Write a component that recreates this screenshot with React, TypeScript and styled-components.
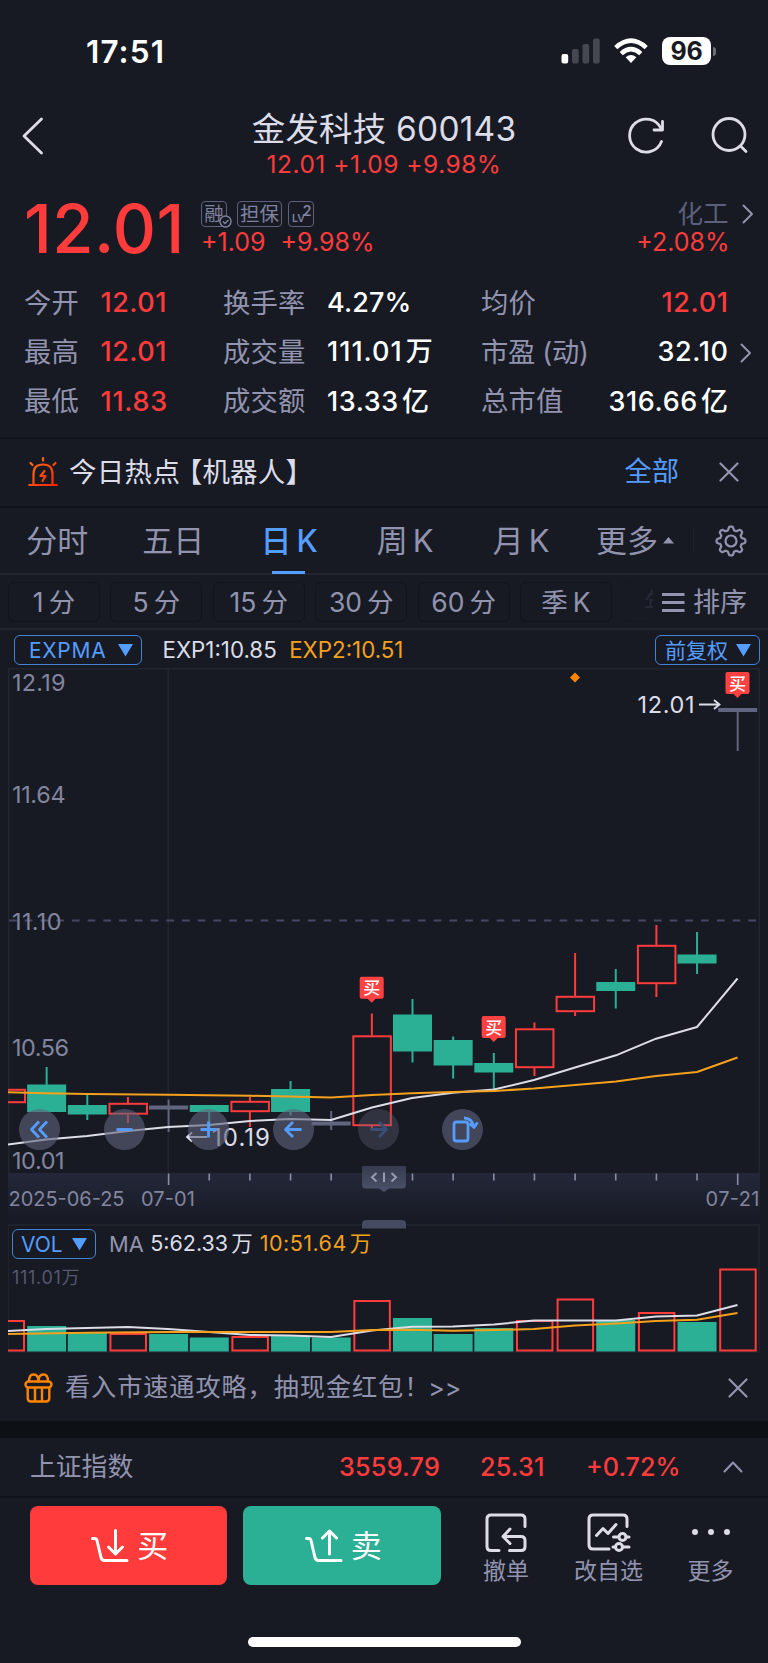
import React from 'react';
import styled, { createGlobalStyle, css } from 'styled-components';

const c = {
  bg: '#171a23',
  red: '#ff3b3b',
  green: '#2bb096',
  blue: '#559cff',
  orange: '#f5a11c',
  label: '#9293ae',
  bright: '#dcdde8',
  line: '#22242f',
  dark: '#10131a',
};

const Global = createGlobalStyle`
  * { box-sizing: border-box; }
  body { margin: 0; background: ${c.bg}; }
  svg { display: block; flex: none; }
`;

const Page = styled.div`
  width: 768px;
  height: 1663px;
  overflow: hidden;
  background: ${c.bg};
  color: ${c.bright};
  font-family: Inter, 'Noto Sans CJK SC', sans-serif;
  display: flex;
  flex-direction: column;
`;

interface TxtProps {
  $size: number;
  $color?: string;
  $weight?: number;
  $ls?: number;
  $ml?: number;
  $pt?: number;
}
const Txt = styled.span<TxtProps>`
  font-size: ${p => p.$size}px;
  line-height: 1.2;
  color: ${p => p.$color ?? c.label};
  font-weight: ${p => p.$weight ?? 400};
  letter-spacing: ${p => p.$ls ?? 0}px;
  margin-left: ${p => p.$ml ?? 0}px;
  padding-top: ${p => p.$pt ?? 0}px;
  white-space: pre;
`;

/* ---------- status bar ---------- */
const StatusBar = styled.div`
  height: 103px;
  flex: none;
  display: flex;
  justify-content: space-between;
  padding: 36px 52px 0 86px;
`;
const Clock = styled.div`
  font-size: 31.5px;
  line-height: 32px;
  font-weight: 600;
  color: #fff;
  letter-spacing: 1.1px;
`;
const StatusIcons = styled.div`
  display: flex;
  align-items: center;
  height: 30px;
`;
const WifiIcon = styled.svg`
  margin-left: 14px;
`;
const Battery = styled.div`
  width: 49px;
  height: 28px;
  margin-left: 14px;
  border-radius: 8px;
  background: #fff;
  color: ${c.bg};
  font-size: 25px;
  font-weight: 700;
  line-height: 28px;
  text-align: center;
  letter-spacing: -0.3px;
`;
const Nub = styled.div`
  width: 3px;
  height: 9px;
  margin-left: 2px;
  border-radius: 0 4px 4px 0;
  background: #6c6e75;
`;

/* ---------- header ---------- */
const Header = styled.header`
  height: 87px;
  flex: none;
  display: grid;
  grid-template-columns: 248px 1fr 248px;
`;
const HeaderSide = styled.div<{ $end?: boolean }>`
  display: flex;
  gap: 46px;
  padding: 14px 20.5px 0 22px;
  justify-content: ${p => (p.$end ? 'flex-end' : 'flex-start')};
`;
const Titles = styled.div`
  display: flex;
  flex-direction: column;
  align-items: center;
  padding-top: 6px;
`;
const Title = styled.div`
  font-size: 33.5px;
  line-height: 40px;
  white-space: nowrap;
  letter-spacing: 0.2px;
`;
const SubTitle = styled.div`
  font-size: 24.5px;
  line-height: 30px;
  color: ${c.red};
  white-space: nowrap;
  letter-spacing: 0.5px;
`;

/* ---------- quote ---------- */
const Quote = styled.section`
  height: 84px;
  flex: none;
  display: flex;
  padding: 8px 14.5px 0 24px;
`;
const Price = styled.div`
  width: 177px;
  font-size: 67px;
  line-height: 62px;
  font-weight: 500;
  color: ${c.red};
  letter-spacing: 0.4px;
`;
const Stack = styled.div<{ $end?: boolean }>`
  display: flex;
  flex-direction: column;
  align-items: ${p => (p.$end ? 'flex-end' : 'flex-start')};
  ${p => p.$end && css`margin-left: auto;`}
`;
const Line = styled.div<{ $h: number; $gap?: number }>`
  height: ${p => p.$h}px;
  display: flex;
  align-items: center;
  gap: ${p => p.$gap ?? 0}px;
`;
const Badge = styled.span<{ $w: number; $ml?: number }>`
  position: relative;
  width: ${p => p.$w}px;
  height: 26px;
  margin-left: ${p => p.$ml ?? 0}px;
  border: 1.5px solid #5e617d;
  border-radius: 4px;
  color: #8083a0;
  font-size: 19.5px;
  line-height: 24px;
  text-align: center;
  white-space: nowrap;
`;
const BadgeCheck = styled.svg`
  position: absolute;
  right: -6px;
  bottom: -2px;
`;
const LvText = styled.span`
  position: absolute;
  left: 3px;
  bottom: 1px;
  font-size: 10.5px;
  font-weight: 600;
  line-height: 12px;
`;
const LvSup = styled.sup`
  position: absolute;
  right: 1.5px;
  top: 0.5px;
  font-size: 14px;
  font-weight: 600;
  line-height: 15px;
`;

const Stats = styled.section`
  height: 163px;
  flex: none;
  padding: 4.6px 13.5px 0 24px;
`;
const StatRow = styled.div`
  height: 49.3px;
  display: grid;
  grid-template-columns: 76.5px 122.5px 104px 154px 1fr auto 26px;
  align-items: center;
`;

/* ---------- notice ---------- */
const Hot = styled.section`
  height: 69px;
  flex: none;
  border-top: 2px solid ${c.dark};
  display: flex;
  align-items: center;
  padding: 0 29px 1px 28px;
`;
const Push = styled.div`
  margin-left: auto;
  display: flex;
  align-items: center;
`;

/* ---------- tabs ---------- */
const Tabs = styled.nav`
  height: 69px;
  flex: none;
  display: flex;
  border-top: 2px solid ${c.dark};
  border-bottom: 2px solid ${c.line};
`;
const Tab = styled.div<{ $on?: boolean; $w?: number; $pl?: number }>`
  position: relative;
  width: ${p => p.$w ?? 116}px;
  padding-left: ${p => p.$pl ?? 0}px;
  padding-right: ${p => (p.$w ? 0 : 1.5)}px;
  display: flex;
  align-items: center;
  justify-content: center;
  gap: 5px;
  font-size: 31px;
  line-height: 36px;
  white-space: nowrap;
  color: ${p => (p.$on ? c.blue : c.label)};
  font-weight: ${p => (p.$on ? 500 : 400)};
  ${p => p.$on && css`
    &::after {
      content: '';
      position: absolute;
      left: 40px;
      bottom: -1px;
      width: 33px;
      height: 3px;
      background: ${c.blue};
    }
  `}
`;
const VLine = styled.div`
  width: 1px;
  height: 24px;
  margin: 21px 21px 0 15px;
  background: #20232d;
`;
const Periods = styled.nav`
  height: 55px;
  flex: none;
  display: flex;
  align-items: center;
  border-bottom: 2px solid ${c.line};
  padding-left: 8px;
`;
const Chips = styled.div`
  display: flex;
  gap: 10.4px;
  width: 645px;
  overflow: hidden;
`;
const Chip = styled.div<{ $faint?: boolean }>`
  flex: none;
  width: 92px;
  height: 40px;
  padding-top: 1px;
  border: 1.5px solid ${p => (p.$faint ? '#151820' : '#11141b')};
  border-radius: 6px;
  display: flex;
  align-items: center;
  justify-content: center;
  gap: 5px;
  font-size: 26.5px;
  line-height: 32px;
  color: ${p => (p.$faint ? '#262935' : c.label)};
`;

/* ---------- indicator bars ---------- */
const IndBar = styled.div<{ $h: number; $pl: number; $pt: number }>`
  height: ${p => p.$h}px;
  flex: none;
  display: flex;
  align-items: flex-start;
  padding: ${p => p.$pt}px 8px 0 ${p => p.$pl}px;
`;
const Select = styled.div<{ $w: number; $ls?: number; $fs?: number; $pl?: number }>`
  width: ${p => p.$w}px;
  height: 30px;
  border: 1.5px solid #4583d2;
  border-radius: 6px;
  display: flex;
  align-items: center;
  justify-content: space-between;
  padding: 0 8px 0 ${p => p.$pl ?? 9}px;
  color: ${c.blue};
  font-size: ${p => p.$fs ?? 21}px;
  line-height: 27px;
  letter-spacing: ${p => p.$ls ?? 0}px;
  white-space: nowrap;
`;
const IndText = styled.div`
  display: flex;
  align-items: center;
  height: 30px;
`;

/* ---------- charts ---------- */
const ChartArea = styled.div`
  position: relative;
  height: 556px;
  flex: none;
`;
const Tools = styled.div`
  position: absolute;
  left: 19px;
  top: 440.5px;
  display: flex;
  gap: 43.7px;
`;
const Tool = styled.button<{ $off?: boolean }>`
  width: 41px;
  height: 41px;
  padding: 0;
  border: 0;
  border-radius: 50%;
  background: rgba(96, 99, 122, ${p => (p.$off ? 0.35 : 0.62)});
  display: flex;
  align-items: center;
  justify-content: center;
`;
const VolumePanel = styled.div`
  height: 129px;
  flex: none;
  margin: 0 8px 0 8px;
  border: 2px solid #1f222d;
  border-width: 2px 2px 2px 1px;
`;

/* ---------- bottom ---------- */
const Promo = styled.section`
  height: 68px;
  flex: none;
  display: flex;
  align-items: center;
  padding: 1px 20px 0 24px;
`;
const Band = styled.div`
  height: 17px;
  flex: none;
  background: #0d1015;
`;
const IndexRow = styled.section`
  height: 60px;
  flex: none;
  display: grid;
  grid-template-columns: 309px 141px 106px 1fr 20px;
  align-items: center;
  padding: 0 25px 0 30px;
  border-bottom: 2px solid ${c.dark};
`;
const Actions = styled.section`
  height: 130px;
  flex: none;
  display: flex;
  padding: 8px 0 0 29.5px;
`;
const TradeButton = styled.button<{ $bg: string }>`
  width: 197.5px;
  height: 79px;
  margin-right: 16px;
  padding: 0 0 0 3px;
  border: 0;
  border-radius: 8px;
  background: ${p => p.$bg};
  color: #fff;
  font: 400 31px/40px Inter, 'Noto Sans CJK SC', sans-serif;
  display: flex;
  align-items: center;
  justify-content: center;
  gap: 8px;
`;
const MiniAction = styled.div<{ $w: number }>`
  width: ${p => p.$w}px;
  display: flex;
  flex-direction: column;
  align-items: center;
  gap: 3px;
  padding-top: 5.5px;
  font-size: 23px;
  line-height: 28px;
  color: ${c.label};
`;
const HomeBar = styled.div`
  width: 273px;
  height: 10px;
  margin: 8.5px auto 0;
  border-radius: 5px;
  background: #fff;
`;

/* ---------- icons ---------- */
const Chevron = ({ w = 12, h = 18, d = 'M1.5 1.5 L10.5 9 L1.5 16.5', color = c.label, sw = 2 }) => (
  <svg width={w} height={h} fill="none" stroke={color} strokeWidth={sw} strokeLinecap="round" strokeLinejoin="round">
    <path d={d} />
  </svg>
);
const Close = () => (
  <svg width="20" height="20" fill="none" stroke={c.label} strokeWidth="2.2" strokeLinecap="round">
    <path d="M1.5 1.5 18.5 18.5M18.5 1.5 1.5 18.5" />
  </svg>
);
const Triangle = () => (
  <svg width="15" height="13"><path d="M0 0H15L7.5 12.5Z" fill={c.blue} /></svg>
);
const gearPath = (() => {
  const pts: string[] = [];
  for (let i = 0; i <= 96; i++) {
    const a = (i / 96) * Math.PI * 2;
    const wave = Math.cos(8 * a);
    const r = 12.7 + 1.8 * Math.tanh(2.2 * wave);
    pts.push(`${(16 + r * Math.sin(a)).toFixed(2)} ${(16 - r * Math.cos(a)).toFixed(2)}`);
  }
  return `M${pts.join('L')}Z`;
})();

const Cart = ({ up }: { up?: boolean }) => (
  <svg width="38" height="34" fill="none" stroke="#fff" strokeWidth="3" strokeLinecap="round" strokeLinejoin="round">
    <path d="M1.5 9.5H3.5Q5.5 9.5 6 11.5L10 28.5Q10.8 31.5 13.5 31.5H36" />
    {up ? <path d="M24.5 25V2M17.5 9 24.5 2 31.5 9" /> : <path d="M24.5 1.5V25M17.5 18 24.5 25 31.5 18" />}
  </svg>
);

/* ---------- chart data ---------- */
type Kind = 'r' | 'g' | 'd';
// [kind, body top, body bottom, wick top, wick bottom, volume top]
const candles: [Kind, number, number, number, number, number][] = [
  ['r', 1089, 1103, 1089, 1103, 1320],
  ['g', 1084.5, 1112, 1067, 1112, 1326],
  ['g', 1105, 1114.5, 1095, 1120, 1333],
  ['r', 1103, 1114.5, 1097, 1123, 1333],
  ['d', 1107.5, 1107.5, 1099.5, 1132, 1334],
  ['g', 1105, 1112, 1105, 1132, 1337.5],
  ['r', 1101, 1112, 1097, 1127, 1336],
  ['g', 1089, 1112, 1081, 1115.5, 1336],
  ['d', 1123.5, 1123.5, 1111, 1130, 1337.5],
  ['r', 1035.5, 1126, 1018 - 4.5, 1130, 1300],
  ['g', 1014.5, 1051.5, 999, 1062.5, 1318],
  ['g', 1040, 1065.5, 1036.5, 1078.5, 1334],
  ['g', 1063, 1072.5, 1053, 1089, 1328],
  ['r', 1028.5, 1068, 1022.5, 1076, 1320],
  ['r', 996, 1012, 953, 1016, 1298.5],
  ['g', 982, 991, 969, 1008.5, 1320],
  ['r', 945, 984, 925, 997, 1312],
  ['g', 954.5, 963.5, 932, 974, 1322],
  ['d', 710, 710, 710, 751, 1268.5],
];
const cx = (i: number) => 6 + i * 40.65;

const exp1 = '8,1144.5 46,1139.5 87,1136 128,1131 168,1127 209,1125 250,1121 290,1119 331,1120 372,1107.5 412,1098 453,1092.7 494,1089.5 534,1080 575,1067.5 616,1055.3 656,1038.7 697,1027 737.5,978.5';
const exp2 = '8,1092.3 46,1093.2 87,1094 168,1094.8 250,1095.8 290,1096.4 331,1097.5 372,1095 412,1093.2 453,1092 494,1091 534,1088.5 575,1085 616,1081.5 656,1076 697,1072 737.5,1057.5';
const ma5 = '8,1331 46,1329 87,1328 128,1327 168,1329 209,1332 250,1335 290,1335.5 331,1337 372,1330.5 412,1326.7 453,1326.5 494,1324.5 534,1320.5 616,1320.5 656,1316.5 697,1315.5 737.5,1305';
const ma10 = '8,1334 87,1332.8 168,1332 331,1332 372,1330 412,1329.8 453,1330.8 494,1330 534,1329 575,1325.5 616,1323.5 656,1321 697,1319.8 737.5,1313';

const T = ({ x, y, s, children, fill = '#83859e', w }: { x: number; y: number; s: number; children: string; fill?: string; w?: number }) => (
  <text x={x} y={y + s * 0.364} fontSize={s} fill={fill} textLength={w} fontFamily="Inter, 'Noto Sans CJK SC', sans-serif">{children}</text>
);

const BuyTag = ({ x, y }: { x: number; y: number }) => (
  <g>
    <path d={`M${x - 10} ${y}H${x + 10}Q${x + 12} ${y} ${x + 12} ${y + 2}V${y + 20}Q${x + 12} ${y + 22} ${x + 10} ${y + 22}H${x + 4}L${x} ${y + 26}L${x - 4} ${y + 22}H${x - 10}Q${x - 12} ${y + 22} ${x - 12} ${y + 20}V${y + 2}Q${x - 12} ${y} ${x - 10} ${y}Z`} fill="#ff4141" />
    <text x={x} y={y + 17.5} fontSize="17" fontWeight="500" textAnchor="middle" fill="#fff" fontFamily="'Noto Sans CJK SC', sans-serif">买</text>
  </g>
);

const PriceChart = () => (
  <svg width="768" height="562" viewBox="0 668 768 562">
    <defs>
      <linearGradient id="axis" x1="0" y1="0" x2="0" y2="1">
        <stop offset="0" stopColor="#232739" />
        <stop offset="1" stopColor="#171a23" />
      </linearGradient>
      <linearGradient id="grip" x1="0" y1="0" x2="0" y2="1">
        <stop offset="0" stopColor="#363b4f" />
        <stop offset="1" stopColor="#4c5269" />
      </linearGradient>
      <clipPath id="plot"><rect x="8" y="668" width="752" height="505" /></clipPath>
    </defs>
    <path d="M8 668.8H760M8.8 668V1173M759.2 668V1224M168.3 668V1173" stroke="#22242f" strokeWidth="1.6" fill="none" />
    <rect x="8" y="1173" width="752" height="51" fill="url(#axis)" />
    <path d="M9 920.5H758" stroke="#454860" strokeWidth="1.8" strokeDasharray="7.7 8.03" />
    <T x={12} y={682} s={23.4} w={53.5}>12.19</T>
    <T x={12} y={794} s={23.4} w={53.5}>11.64</T>
    <T x={12} y={921} s={23.4} w={49.5}>11.10</T>
    <T x={12} y={1047} s={23.4} w={57}>10.56</T>
    <T x={12} y={1160} s={23.4} w={52.5}>10.01</T>
    <g clipPath="url(#plot)">
      {candles.map(([k, t, b, wt, wb], i) => {
        const x = cx(i);
        const color = k === 'r' ? c.red : k === 'g' ? c.green : '#62657f';
        return (
          <g key={i} stroke={color} strokeWidth="2" fill="none">
            {k === 'r' && <rect x={x - 18.5} y={t + 0.8} width="37.5" height={b - t - 1.6} />}
            {k === 'g' && <rect x={x - 19.5} y={t} width="39" height={b - t} fill={color} stroke="none" />}
            {k === 'd' && <path d={`M${x - 19.5} ${t}h39`} strokeWidth="4" />}
            {k === 'r' ? <path d={`M${x} ${wt}V${t}M${x} ${b}V${wb}`} /> : <path d={`M${x} ${wt}V${wb}`} />}
          </g>
        );
      })}
      <polyline points={exp1} fill="none" stroke="#dcdde6" strokeWidth="2" strokeLinejoin="round" />
      <polyline points={exp2} fill="none" stroke={c.orange} strokeWidth="2" strokeLinejoin="round" />
    </g>
    <BuyTag x={371.7} y={976.7} />
    <BuyTag x={493.7} y={1016} />
    <BuyTag x={737.5} y={672} />
    <path d="M575 672.5L580 677.5L575 682.5L570 677.5Z" fill="#ff8400" />
    <T x={637.5} y={704.5} s={23.5} fill={c.bright} w={57}>12.01</T>
    <path d="M699 704.5H719M714 700L719.5 704.5L714 709" fill="none" stroke={c.bright} strokeWidth="1.8" />
    <T x={212} y={1137.5} s={24} fill={c.bright} w={58}>10.19</T>
    <path d="M207 1137H187M192 1132.5L187 1137L192 1141.5" fill="none" stroke={c.bright} strokeWidth="1.8" />
    {candles.map((_, i) => i >= 4 && i !== 9 && (
      <path key={i} d={`M${cx(i)} 1173.5v${i === 4 || i === 18 ? 11.5 : 7}`} stroke="#8b8da5" strokeWidth="1.6" />
    ))}
    <T x={8.5} y={1199} s={20} w={116}>2025-06-25</T>
    <T x={141} y={1199} s={20} w={54}>07-01</T>
    <T x={705.5} y={1199} s={20} w={54}>07-21</T>
    <path d="M362 1166H406V1185Q406 1188.5 402 1188.5H389L384 1192L379 1188.5H366Q362 1188.5 362 1185Z" fill="url(#grip)" />
    <path d="M376.5 1173L372 1177.3L376.5 1181.5M384 1172.5V1182M391.5 1173L396 1177.3L391.5 1181.5" fill="none" stroke="#9a9cb4" strokeWidth="2" />
    <path d="M8 1224.8H760" stroke="#1f222d" strokeWidth="1.6" />
    <path d="M362 1228.5V1224Q362 1220 366 1220H402Q406 1220 406 1224V1228.5Z" fill="#454a60" />
  </svg>
);

const VolumeSvg = styled.svg`
  margin-left: -9px;
`;
const VolumeBars = () => (
  <VolumeSvg width="768" height="88" viewBox="0 1264 768 88">
    <defs><clipPath id="vol"><rect x="8" y="1264" width="752" height="88" /></clipPath></defs>
    <T x={12} y={1277} s={18} fill="#55586e" w={67.5}>111.01万</T>
    <g clipPath="url(#vol)">
      {candles.map(([k, , , , , v], i) => {
        const x = cx(i);
        const red = k === 'r' || i === 18;
        return red
          ? <rect key={i} x={x - 17.5} y={v + 1} width="35.5" height={1350.5 - v - 1} fill="none" stroke={c.red} strokeWidth="2" />
          : <rect key={i} x={x - 19.5} y={v} width="39" height={1351.5 - v} fill={c.green} />;
      })}
      <polyline points={ma5} fill="none" stroke="#dcdde6" strokeWidth="2" strokeLinejoin="round" />
      <polyline points={ma10} fill="none" stroke={c.orange} strokeWidth="2" strokeLinejoin="round" />
    </g>
  </VolumeSvg>
);

const toolIcons: { off?: boolean; d: string }[] = [
  { d: 'M20 12.5 12.5 20.5 20 28.5M28 12.5 20.5 20.5 28 28.5' },
  { d: 'M12.5 20.5H28.5' },
  { d: 'M12.5 20.5H28.5M20.5 12.5V28.5' },
  { d: 'M28.5 20.5H13M20 13 12.5 20.5 20 28' },
  { off: true, d: 'M12.5 20.5H28M21 13 28.5 20.5 21 28' },
  { d: 'M14.5 13H23.5Q26 13 26 15.5V29.5Q26 32 23.5 32H14.5Q12 32 12 29.5V15.5Q12 13 14.5 13ZM22 9Q30 9 32 18M27.5 14.5 32 18.5 35.5 13.5' },
];

interface Stat {
  label: string;
  value: string;
  red?: boolean;
  ls?: number;
}
const stats: Stat[][] = [
  [{ label: '今开', value: '12.01', red: true }, { label: '换手率', value: '4.27%', ls: 0.1 }, { label: '均价', value: '12.01', red: true, ls: 0.6 }],
  [{ label: '最高', value: '12.01', red: true }, { label: '成交量', value: '111.01 万', ls: 1 }, { label: '市盈 (动)', value: '32.10', ls: 0.6 }],
  [{ label: '最低', value: '11.83', red: true, ls: 0.7 }, { label: '成交额', value: '13.33 亿', ls: 0.6 }, { label: '总市值', value: '316.66 亿', ls: 0.6 }],
];

const Unit = styled.span`margin-left: 3px;`;
const Amount = ({ s }: { s: Stat }) => {
  const [n, u] = s.value.split(' ');
  return (
    <Txt $size={27} $weight={500} $color={s.red ? c.red : '#fff'} $ls={s.ls ?? 0.5}>
      {n}{u && <Unit>{u}</Unit>}
    </Txt>
  );
};

export default function App() {
  return (
    <Page>
      <Global />
      <StatusBar>
        <Clock>17:51</Clock>
        <StatusIcons>
          <svg width="39" height="26">
            <rect x="0.5" y="16" width="6.7" height="9.5" rx="2" fill="#fff" />
            <rect x="11" y="11" width="6.7" height="14.5" rx="2" fill="#454850" />
            <rect x="21.5" y="6" width="6.7" height="19.5" rx="2" fill="#454850" />
            <rect x="32" y="0.5" width="6.7" height="25" rx="2" fill="#454850" />
          </svg>
          <WifiIcon width="34" height="26">
            <g fill="none" stroke="#fff" strokeWidth="4.6">
              <path d="M1.8 9.6Q17-4.2 32.2 9.6" />
              <path d="M7.2 15.6Q17 6.8 26.8 15.6" />
            </g>
            <path d="M11.7 19.2Q17 15 22.3 19.2L17 25Z" fill="#fff" />
          </WifiIcon>
          <Battery>96</Battery>
          <Nub />
        </StatusIcons>
      </StatusBar>

      <Header>
        <HeaderSide>
          <Chevron w={22} h={38} d="M19.5 2 L2 19 L19.5 36" color={c.bright} sw={2.8} />
        </HeaderSide>
        <Titles>
          <Title>金发科技 600143</Title>
          <SubTitle>12.01 +1.09 +9.98%</SubTitle>
        </Titles>
        <HeaderSide $end>
          <svg width="37" height="37" fill="none" stroke={c.bright} strokeWidth="2.8" strokeLinecap="round" strokeLinejoin="round">
            <path d="M33.5 24.5A16.5 16.5 0 1 1 33 11.5" />
            <path d="M34.5 4.5V13H26" />
          </svg>
          <svg width="37" height="37" fill="none" stroke={c.bright} strokeWidth="2.8" strokeLinecap="round">
            <circle cx="18" cy="17.5" r="16" />
            <path d="M29.5 29 35 34.5" />
          </svg>
        </HeaderSide>
      </Header>

      <Quote>
        <Price>12.01</Price>
        <Stack>
          <Line $h={32}>
            <Badge $w={26}>
              融
              <BadgeCheck width="13" height="13" viewBox="0 0 13 13">
                <circle cx="6.5" cy="6.5" r="5.5" fill={c.bg} stroke="#8083a0" strokeWidth="1.4" />
                <path d="M3.8 6.5 6 8.6 9.4 5" fill="none" stroke="#8083a0" strokeWidth="1.4" />
              </BadgeCheck>
            </Badge>
            <Badge $w={45} $ml={10}>担保</Badge>
            <Badge $w={26} $ml={6}><LvText>LV</LvText><LvSup>2</LvSup></Badge>
          </Line>
          <Line $h={24} $gap={15}>
            <Txt $size={25} $color={c.red}>+1.09</Txt>
            <Txt $size={25} $color={c.red}>+9.98%</Txt>
          </Line>
        </Stack>
        <Stack $end>
          <Line $h={31} $gap={13}>
            <Txt $size={25.5} $color="#5b5f7b" $pt={1}>化工</Txt>
            <Chevron h={20} d="M1.5 1.5 L10 10 L1.5 18.5" />
          </Line>
          <Line $h={25}>
            <Txt $size={25} $color={c.red}>+2.08%</Txt>
            <svg width="24" height="1" />
          </Line>
        </Stack>
      </Quote>

      <Stats>
        {stats.map((row, i) => (
          <StatRow key={i}>
            {row.map(s => (
              <React.Fragment key={s.label}>
                <Txt $size={27.3} $pt={2} $ls={s.label.includes('(') ? -0.3 : 0.2}>{s.label}</Txt>
                <Amount s={s} />
              </React.Fragment>
            ))}
            {i === 1 && <Line $h={20}><svg width="11" height="1" /><Chevron h={20} d="M1.5 1.5 L10 10 L1.5 18.5" /></Line>}
          </StatRow>
        ))}
      </Stats>

      <Hot>
        <svg width="30" height="30" viewBox="0 0 30 30" fill="none" stroke="url(#siren)" strokeWidth="2.2" strokeLinecap="round" strokeLinejoin="round">
          <defs>
            <linearGradient id="siren" gradientUnits="userSpaceOnUse" x1="0" y1="0" x2="30" y2="30">
              <stop offset="0" stopColor="#ff7a1a" />
              <stop offset="1" stopColor="#ff1e00" />
            </linearGradient>
          </defs>
          <path d="M1.2 28H28.8M5.5 27V17Q5.5 7.5 15 7.5Q24.5 7.5 24.5 17V27M15 1.2V3.6M2.5 6 4.5 8M27.5 6 25.5 8M16.5 14 12.5 19H17.5L14.5 24" />
        </svg>
        <Txt $size={27.5} $color={c.bright} $ml={11} $ls={0.3} $pt={1}>今日热点</Txt>
        <Txt $size={27.5} $color={c.bright} $ml={-5.5} $ls={0.2} $pt={1}>【机器人】</Txt>
        <Push>
          <Txt $size={27.3} $color={c.blue} $pt={1}>全部</Txt>
          <svg width="40" height="1" />
          <Close />
        </Push>
      </Hot>

      <Tabs>
        <Tab>分时</Tab>
        <Tab>五日</Tab>
        <Tab $on><span>日</span><span>K</span></Tab>
        <Tab><span>周</span><span>K</span></Tab>
        <Tab><span>月</span><span>K</span></Tab>
        <Tab $w={98} $pl={12}>
          更多
          <svg width="11" height="7"><path d="M5.5 0 11 6.5H0Z" fill={c.label} /></svg>
        </Tab>
        <VLine />
        <Tab $w={32}>
          <svg width="32" height="32" fill="none" stroke={c.label} strokeWidth="2.2" strokeLinejoin="round">
            <path d={gearPath} />
            <circle cx="16" cy="16" r="5.5" />
          </svg>
        </Tab>
      </Tabs>

      <Periods>
        <Chips>
          {[['1', '分'], ['5', '分'], ['15', '分'], ['30', '分'], ['60', '分'], ['季', 'K'], ['年', 'K']].map(([a, b]) => (
            <Chip key={a} $faint={a === '年'}><span>{a}</span><span>{b}</span></Chip>
          ))}
        </Chips>
        <svg width="32" height="22" viewBox="-8 -1 32 22" stroke={c.label} strokeWidth="2.8">
          <path d="M1 2.5H23.5M1 10.5H23.5M1 18.5H23.5" />
        </svg>
        <Txt $size={27} $ml={8} $pt={3}>排序</Txt>
      </Periods>

      <IndBar $h={38} $pl={14} $pt={5}>
        <Select $w={128} $ls={0.7} $pl={14}>EXPMA <Triangle /></Select>
        <IndText>
          <Txt $size={22.3} $color={c.bright} $ml={20.5}>EXP1:10.85</Txt>
          <Txt $size={22.3} $color={c.orange} $ml={12.5}>EXP2:10.51</Txt>
        </IndText>
        <Push><Select $w={105}>前复权 <Triangle /></Select></Push>
      </IndBar>

      <ChartArea>
        <PriceChart />
        <Tools>
          {toolIcons.map((t, i) => (
            <Tool key={i} $off={t.off}>
              <svg width="41" height="41" fill="none" stroke={t.off ? '#384d78' : c.blue} strokeWidth="2.8" strokeLinejoin="round"><path d={t.d} /></svg>
            </Tool>
          ))}
        </Tools>
      </ChartArea>

      <VolumePanel>
        <IndBar $h={38} $pl={3} $pt={3}>
          <Select $w={84} $pl={8}>VOL <Triangle /></Select>
          <IndText>
            <Txt $size={21.8} $ml={13}>MA</Txt>
            <Txt $size={21.5} $color={c.bright} $ml={6.5}>5:62.33<Unit>万</Unit></Txt>
            <Txt $size={21.5} $color={c.orange} $ml={7} $ls={0.5}>10:51.64<Unit>万</Unit></Txt>
          </IndText>
        </IndBar>
        <VolumeBars />
      </VolumePanel>

      <Promo>
        <svg width="29" height="30" fill="none" stroke="#ff8400" strokeWidth="2.4" strokeLinejoin="round">
          <rect x="1.5" y="8.5" width="26" height="6" rx="3" />
          <path d="M3.7 14.5V25Q3.7 28.5 7 28.5H22Q25.3 28.5 25.3 25V14.5M11 14.5V28.5M18 14.5V28.5" />
          <path d="M5 8.5Q5 1.5 9.5 1.5Q14.5 1.5 14.5 8.5Q14.5 1.5 19.5 1.5Q24 1.5 24 8.5" />
        </svg>
        <Txt $size={25.2} $ml={12} $ls={0.9}>看入市速通攻略，抽现金红包！</Txt>
        <Txt $size={25} $ml={-2}>{'>>'}</Txt>
        <Push><Close /></Push>
      </Promo>
      <Band />

      <IndexRow>
        <Txt $size={25.8} $pt={1}>上证指数</Txt>
        <Txt $size={25.2} $color={c.red} $weight={500} $ls={0.25}>3559.79</Txt>
        <Txt $size={25.2} $color={c.red} $weight={500} $ls={0.2}>25.31</Txt>
        <Txt $size={25.2} $color={c.red} $weight={500}>+0.72%</Txt>
        <Chevron w={20} h={12} d="M1.5 10.5 L10 1.5 L18.5 10.5" />
      </IndexRow>

      <Actions>
        <TradeButton $bg={c.red}><Cart />买</TradeButton>
        <TradeButton $bg={c.green}><Cart up />卖</TradeButton>
        <MiniAction $w={99}>
          <svg width="42" height="42" viewBox="0 -1 42 42" fill="none" stroke={c.bright} strokeWidth="3" strokeLinecap="round" strokeLinejoin="round">
            <path d="M14 37.5H6Q2 37.5 2 33.5V6Q2 2 6 2H36Q40 2 40 6V13.5" />
            <path d="M25 16 18 23.5 25 30.5M18.5 23.5H36Q40 23.5 40 27.5V33.5Q40 37.5 36 37.5H24.5" />
          </svg>
          撤单
        </MiniAction>
        <MiniAction $w={106}>
          <svg width="44" height="42" viewBox="0 -1 44 42" fill="none" stroke={c.bright} strokeWidth="3" strokeLinecap="round" strokeLinejoin="round">
            <path d="M22 36H6Q2 36 2 32V6Q2 2 6 2H36Q40 2 40 6V13.5" />
            <path d="M9.5 22.5 16 15.5 21 20.5 29 11.5" />
            <circle cx="35.5" cy="24" r="3.5" /><path d="M26.5 24H31.5M39 24H42" />
            <circle cx="32" cy="34" r="3.5" /><path d="M26 34H28.5M35.5 34H42" />
          </svg>
          改自选
        </MiniAction>
        <MiniAction $w={98}>
          <svg width="40" height="42" fill={c.bright}>
            <circle cx="4" cy="20" r="3" /><circle cx="20" cy="20" r="3" /><circle cx="36" cy="20" r="3" />
          </svg>
          更多
        </MiniAction>
      </Actions>
      <HomeBar />
    </Page>
  );
}
